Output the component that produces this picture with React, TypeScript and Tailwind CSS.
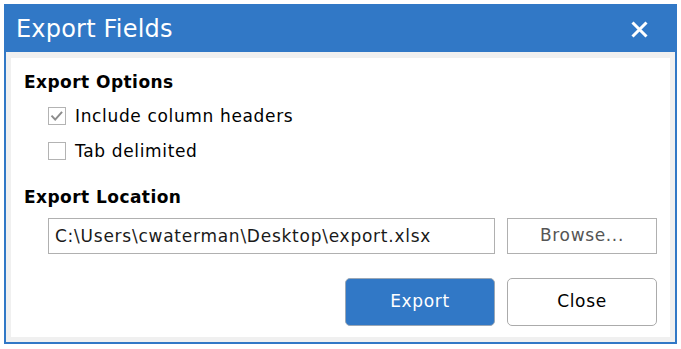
import React, { useState } from 'react';

// Export Fields dialog

const CheckRow: React.FC<{ label: string; checked: boolean; onToggle: () => void }> = ({ label, checked, onToggle }) => (
  <div className="flex h-[24px] items-center cursor-default" onClick={onToggle}>
    <span className="flex h-[18px] w-[18px] shrink-0 items-center justify-center border border-[#b3b3b3] bg-white">
      {checked && (
        <svg width="16" height="16" viewBox="0 0 16 16" fill="none">
          <polyline points="3.2,8.4 6.2,11.6 12.4,4.6" stroke="#8c8c8c" strokeWidth="2" strokeLinecap="square" />
        </svg>
      )}
    </span>
    <span className="ml-[9px] text-[17px] leading-[24px] tracking-[0.65px] text-black">{label}</span>
  </div>
);

export default function App() {
  const [headers, setHeaders] = useState(true);
  const [tabDelimited, setTabDelimited] = useState(false);
  const [path, setPath] = useState('C:\\Users\\cwaterman\\Desktop\\export.xlsx');

  return (
    <div className="h-[349px] w-[681px] bg-white pl-[4px] pt-[4px] font-['DejaVu_Sans',sans-serif]">
      <div className="flex h-[340px] w-[673px] flex-col">
        {/* barre de titre */}
        <div className="flex h-[48px] items-center justify-between bg-[#3178c6] pl-[12px] pr-[29px] pt-[2px]">
          <span className="text-[24px] leading-[24px] tracking-[0.2px] text-white">Export Fields</span>
          <svg width="17" height="17" viewBox="0 0 17 17" fill="none">
            <path d="M1.5 1.5 L15.5 15.5 M15.5 1.5 L1.5 15.5" stroke="white" strokeWidth="3" />
          </svg>
        </div>

        <div className="flex flex-1 flex-col border-x-2 border-b-2 border-[#3178c6] bg-[#f0f0f0] px-[5px] pb-[5px] pt-[6px]">
          <div className="flex flex-1 flex-col bg-white px-[13px] pt-[14px]">
            <h2 className="text-[17px] font-bold leading-[20px] tracking-[0.45px] text-black">Export Options</h2>
            <div className="mt-[12px] flex flex-col gap-[11px] pl-[24px]">
              <CheckRow label="Include column headers" checked={headers} onToggle={() => setHeaders(!headers)} />
              <CheckRow label="Tab delimited" checked={tabDelimited} onToggle={() => setTabDelimited(!tabDelimited)} />
            </div>

            <h2 className="mt-[24px] text-[17px] font-bold leading-[20px] tracking-[0.45px] text-black">Export Location</h2>
            <div className="mt-[11px] flex gap-[12px] pl-[24px]">
              <input
                value={path}
                onChange={(e) => setPath(e.target.value)}
                className="h-[36px] w-[447px] border border-[#b0b0b0] bg-white pl-[6px] text-[17px] tracking-[0.75px] text-[#1a1a1a] outline-none"
              />
              <button className="h-[36px] w-[150px] border border-[#b0b0b0] bg-white text-[17px] tracking-[0.65px] text-[#555555]">
                Browse...
              </button>
            </div>

            <div className="mt-[24px] flex justify-end gap-[12px]">
              <button className="h-[48px] w-[150px] rounded-[5px] border border-[#9aa7b6] bg-[#3178c6] text-[17px] tracking-[0.65px] text-white">
                Export
              </button>
              <button className="h-[48px] w-[150px] rounded-[5px] border border-[#ababab] bg-white text-[17px] tracking-[0.65px] text-black">
                Close
              </button>
            </div>
          </div>
        </div>
      </div>
    </div>
  );
}
